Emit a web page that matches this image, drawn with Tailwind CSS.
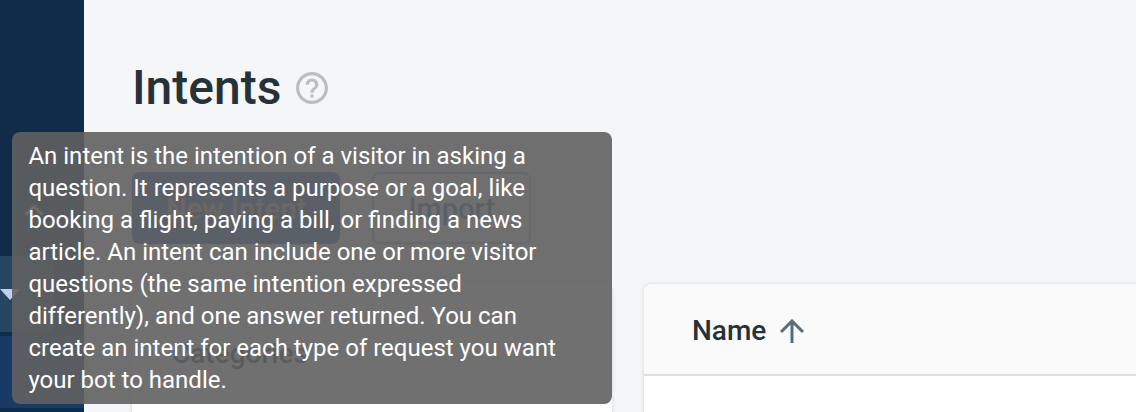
<!DOCTYPE html>
<html lang="en">
<head>
<meta charset="utf-8">
<meta name="viewport" content="width=device-width, initial-scale=1">
<title>Intents</title>
<script src="https://cdn.jsdelivr.net/npm/@tailwindcss/browser@4"></script>
</head>
<body class="flex h-screen overflow-hidden bg-[#f4f6f8] font-['Roboto',sans-serif] text-[#263238]">
  <nav aria-label="Main" class="flex w-[84px] shrink-0 flex-col gap-1 bg-[#102c4a]">
    <div class="flex h-[252px] items-end pb-9 pl-6">
      <button type="button" aria-label="Collapse" class="text-[#d0d8e8]">
        <svg class="block h-3 w-5" viewBox="0 0 20 12" fill="none" stroke="currentColor" stroke-width="3"><path d="M2 10.500L10 2.500L18 10.500"/></svg>
      </button>
    </div>
    <button type="button" aria-label="Expand" class="flex h-19 w-[54px] shrink-0 items-center rounded-r-lg bg-[#264663] text-[#c3d0ec]">
      <svg class="block h-[11px] w-5" viewBox="0 0 20 11" fill="currentColor"><path d="M0 0H20L10 11Z"/></svg>
    </button>
    <a href="#" aria-label="Intents" class="block h-18 shrink-0 bg-[#173a66]"></a>
  </nav>
  <main class="min-w-0 flex-1 pt-16 pl-12">
    <header class="flex h-12 items-center gap-[15px]">
      <h1 class="text-[48px] leading-12 font-medium">Intents</h1>
      <div class="relative">
        <button type="button" aria-label="Help" aria-describedby="tip" class="block text-[#bdbdbd]">
          <svg class="block size-8" viewBox="2 2 20 20" fill="currentColor"><path d="M11 18h2v-2h-2v2zm1-16C6.480 2 2 6.480 2 12s4.480 10 10 10 10-4.480 10-10S17.520 2 12 2zm0 18c-4.410 0-8-3.590-8-8s3.590-8 8-8 8 3.590 8 8-3.590 8-8 8zm0-14c-2.210 0-4 1.790-4 4h2c0-1.100.9-2 2-2s2 .9 2 2c0 2-3 1.750-3 5h2c0-2.250 3-2.500 3-5 0-2.210-1.790-4-4-4z"/></svg>
        </button>
        <div id="tip" role="tooltip" class="absolute top-[60px] left-1/2 z-10 w-[600px] -translate-x-1/2 rounded-lg bg-[#616161]/90 px-4 py-2 text-2xl leading-8 text-white">An intent is the intention of a visitor in asking a<br>question. It represents a purpose or a goal, like<br>booking a flight, paying a bill, or finding a news<br>article. An intent can include one or more visitor<br>questions (the same intention expressed<br>differently), and one answer returned. You can<br>create an intent for each type of request you want<br>your bot to handle.</div>
      </div>
    </header>
    <div class="mt-15 flex gap-8">
      <button type="button" class="h-18 rounded-lg bg-[#2e62a8] px-[34px] pt-1 text-[29px] font-medium text-[#c8a882]">New Intent</button>
      <button type="button" class="h-18 rounded-lg border-2 border-[#2e62a8]/50 px-[34px] pt-1 text-[29px] font-medium text-[#2e62a8]">Import</button>
    </div>
    <div class="mt-10 flex gap-8">
      <section class="w-[480px] shrink-0 rounded-t-lg bg-white pb-12 shadow-[0_0_3px_1px_#dde1e5]">
        <h2 class="rounded-t-lg bg-[#fafafa] px-10 pt-12 text-[28px] leading-11 font-medium">Categories</h2>
      </section>
      <table class="min-w-0 flex-1 rounded-tl-lg bg-white shadow-[0_0_3px_1px_#dde1e5]">
        <thead class="block">
          <tr class="block">
            <th class="block h-[92px] rounded-tl-lg border-b-2 border-[#e0e0e0] bg-[#fafafa] px-12 pt-1 text-left">
              <button type="button" class="flex h-full items-center gap-[14px] text-[28px] font-medium">Name
                <svg class="size-6 text-[#546e7a]" viewBox="0 0 24 24" fill="none" stroke="currentColor" stroke-width="3"><path d="M12 24V2M1 13L12 2L23 13"/></svg>
              </button>
            </th>
          </tr>
        </thead>
      </table>
    </div>
  </main>
</body>
</html>
